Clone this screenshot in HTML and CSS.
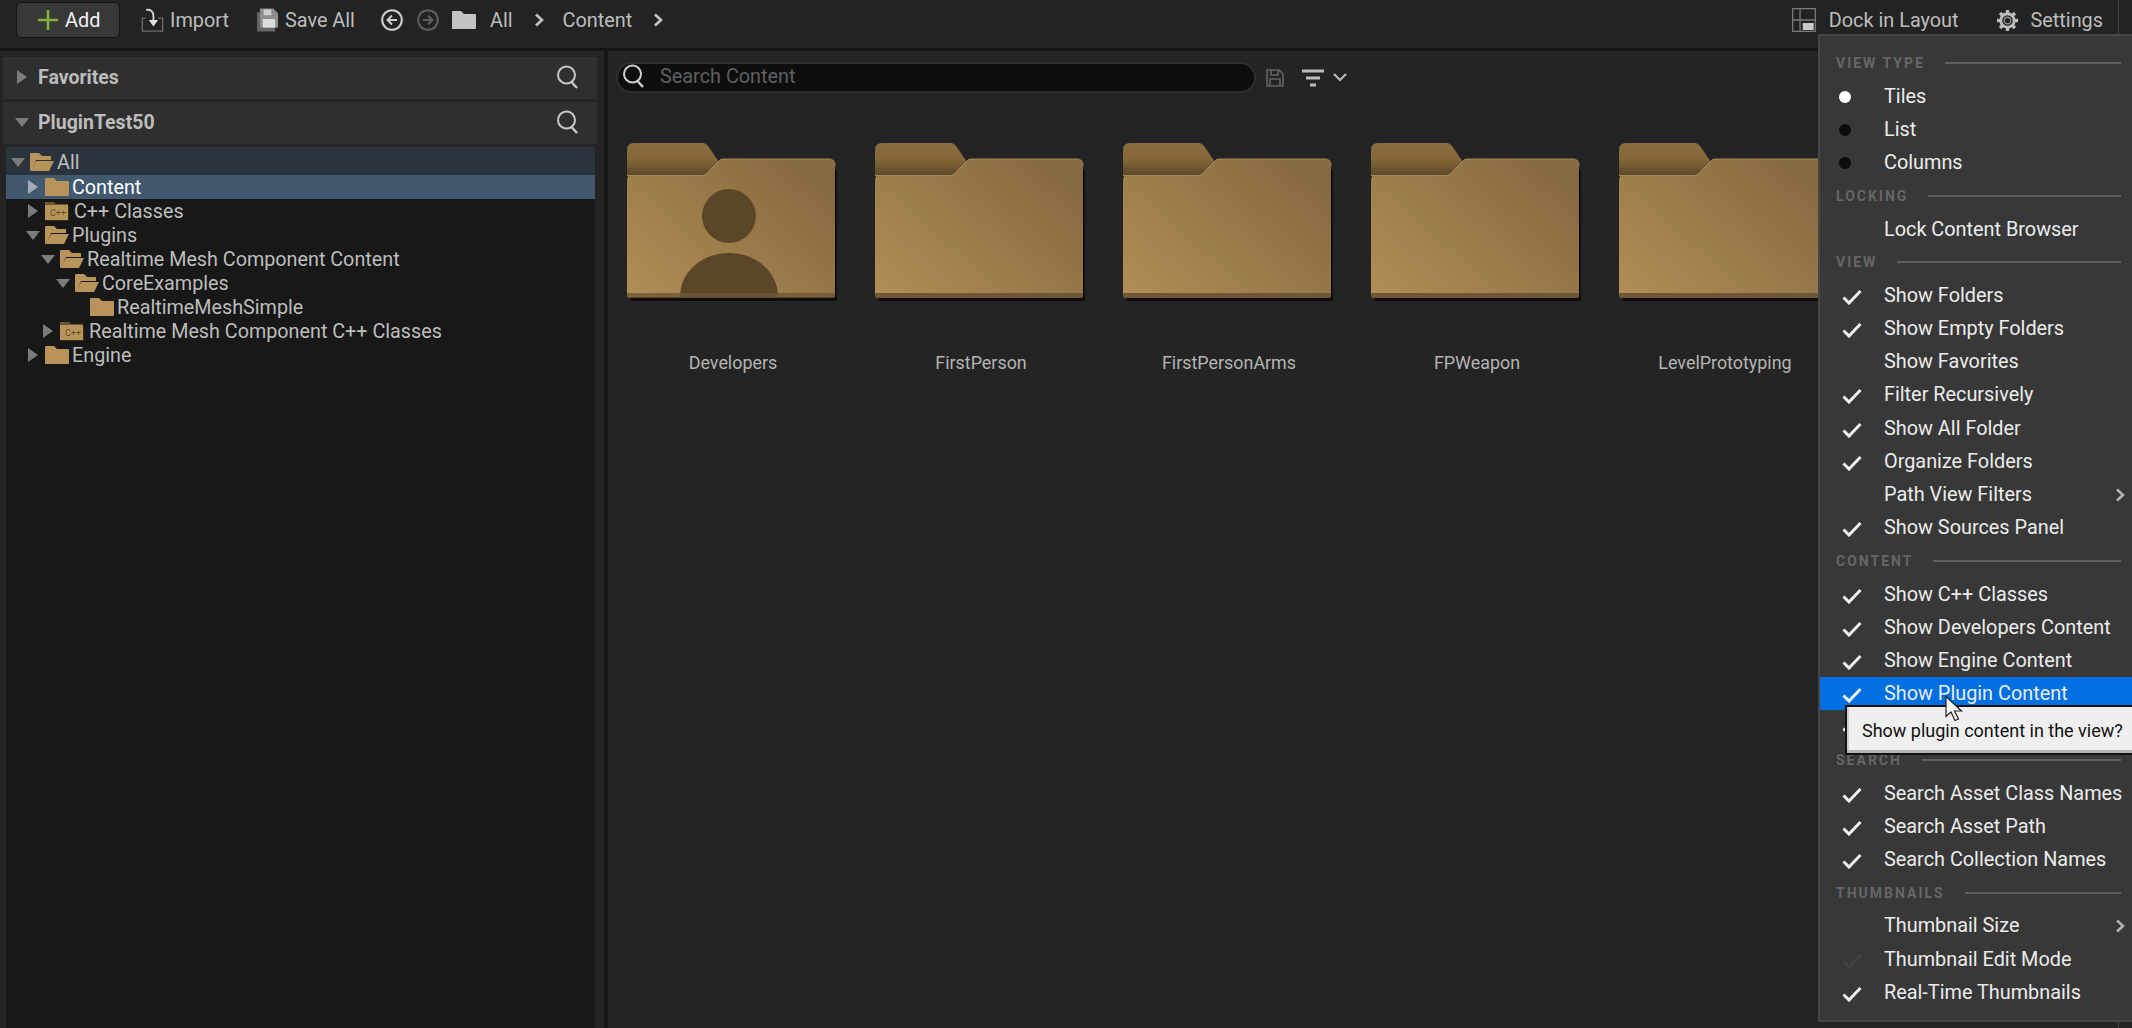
FILE: index.html
```html
<!DOCTYPE html>
<html lang="en">
<head>
  <meta charset="UTF-8" />
  <title>Content Browser</title>
  <link rel="stylesheet" href="styles.css">
</head>
<body>

<svg class="defs" width="0" height="0">
  <defs>
    <linearGradient id="tabGrad" x1="0" y1="0" x2="0" y2="1">
      <stop offset="0" stop-color="#8a6d40"/>
      <stop offset="0.45" stop-color="#846839"/>
      <stop offset="1" stop-color="#5a4629"/>
    </linearGradient>
    <linearGradient id="bodyGrad" x1="0" y1="1" x2="1" y2="0.25">
      <stop offset="0" stop-color="#b18e57"/>
      <stop offset="1" stop-color="#866a3f"/>
    </linearGradient>
    <symbol id="bigFolder" viewBox="0 0 214 160">
      <path d="M4 158 h206 v-132 h-4 v126 h-202 z" fill="#0e0e0e"/>
      <path d="M0 34 V7 Q0 0 7 0 H76 Q79 0 81 3 L94 22 L82 32 H0 Z" fill="url(#tabGrad)"/>
      <path d="M0 38 Q0 32 4 32 H76 Q79 32 81 29 L92 18 Q93 16 96 16 H202 Q208 16 208 23 V154 H0 Z" fill="url(#bodyGrad)"/>
      <path d="M0 32.5 H76 Q79 32 81 29 L92 18 Q93 16 96 16 H202 Q208 16 208 23" fill="none" stroke="#a88a55" stroke-width="1"/>
    </symbol>
    <symbol id="closedFolder" viewBox="0 0 24 18">
      <path d="M0 18 V1 Q0 0 1 0 H9 L12 3 H23 Q24 3 24 4 V17 Q24 18 23 18 Z" fill="#b8945b"/>
    </symbol>
    <symbol id="openFolder" viewBox="0 0 24 18">
      <path d="M0 18 V1 Q0 0 1 0 H9 L12 3 H20 Q21 3 21 4 V7 H6 L2 17 Z" fill="#b8945b"/>
      <path d="M1 18 L6 8 H24 L19 18 Z" fill="#b8945b"/>
    </symbol>
    <symbol id="codeFolder" viewBox="0 0 24 20">
      <path d="M1 20 H24 V5 H1 Z" fill="#3a2a12"/>
      <path d="M0 18 V1 H9 L11 3 H23 V18 Z" fill="#6b5430"/>
      <path d="M0 19 V4 H23 V19 Z" fill="#b8945b"/>
    </symbol>
    <symbol id="lens" viewBox="0 0 24 24">
      <circle cx="10.5" cy="10" r="8.5" fill="none" stroke="currentColor" stroke-width="2"/>
      <path d="M15.5 17 L21 23" stroke="currentColor" stroke-width="2.4" fill="none"/>
    </symbol>
    <symbol id="tick" viewBox="0 0 20 16">
      <path d="M1.5 8.5 L7 14 L18.5 2" fill="none" stroke="currentColor" stroke-width="3"/>
    </symbol>
    <symbol id="chev" viewBox="0 0 10 14">
      <path d="M2 1.5 L8 7 L2 12.5" fill="none" stroke="currentColor" stroke-width="2.6"/>
    </symbol>
  </defs>
</svg>

<header class="toolbar">
  <button class="add-btn">
    <svg class="ic-plus" viewBox="0 0 20 20"><path d="M10 0 V20 M0 10 H20" stroke="#83b13d" stroke-width="2.6"/></svg>
    <span>Add</span>
  </button>
  <div class="tool import">
    <svg class="ic-import" viewBox="0 0 24 26">
      <path d="M5 11 H1 V25 H23 V11 H18" fill="none" stroke="#6e6e6e" stroke-width="1.4"/>
      <path d="M5 2 Q13 1 13 9 V15" fill="none" stroke="#cfcfcf" stroke-width="2"/>
      <path d="M8 13 H18 L13 20 Z" fill="#e2e2e2"/>
    </svg>
    <span>Import</span>
  </div>
  <div class="tool saveall">
    <svg class="ic-save" viewBox="0 0 22 24">
      <path d="M0 4 H3 V20 H19 V24 H0 Z" fill="#666"/>
      <path d="M3 0 H17 L22 5 V20 H3 Z" fill="#8d8d8d"/>
      <path d="M7 1 H15 V7 H7 Z" fill="#cfcfcf"/>
      <path d="M6 11 H19 V20 H6 Z" fill="#dcdcdc"/>
    </svg>
    <span>Save All</span>
  </div>
  <svg class="ic-nav back" viewBox="0 0 22 22">
    <circle cx="11" cy="11" r="9.8" fill="none" stroke="#cfcfcf" stroke-width="2"/>
    <path d="M16 11 H7 M11 6.5 L6.5 11 L11 15.5" fill="none" stroke="#cfcfcf" stroke-width="2"/>
  </svg>
  <svg class="ic-nav fwd" viewBox="0 0 22 22">
    <circle cx="11" cy="11" r="9.8" fill="none" stroke="#5e5e5e" stroke-width="2"/>
    <path d="M6 11 H15 M11 6.5 L15.5 11 L11 15.5" fill="none" stroke="#5e5e5e" stroke-width="2"/>
  </svg>
  <svg class="ic-crumb" viewBox="0 0 24 18"><path d="M0 18 V1 Q0 0 1 0 H9 L12 3 H23 Q24 3 24 4 V17 Q24 18 23 18 Z" fill="#c4c4c4"/></svg>
  <span class="crumb first">All</span>
  <svg class="crumb-sep"><use href="#chev"/></svg>
  <span class="crumb">Content</span>
  <svg class="crumb-sep"><use href="#chev"/></svg>

  <div class="toolbar-right">
    <div class="tool">
      <svg class="ic-dock" viewBox="0 0 24 24">
        <path d="M.7 .7 H23.3 V23.3 H.7 Z M8 .7 V23.3 M.7 12 H23.3" fill="none" stroke="#7a7a7a" stroke-width="1.3"/>
        <path d="M10.7 15 H21.7 V22 H10.7 Z" fill="#c8c8c8"/>
      </svg>
      <span>Dock in Layout</span>
    </div>
    <div class="tool settings">
      <svg class="ic-gear" viewBox="0 0 24 24">
        <path d="M12 1 V5 M12 19 V23 M1 12 H5 M19 12 H23 M4.2 4.2 L7 7 M17 17 L19.8 19.8 M4.2 19.8 L7 17 M17 7 L19.8 4.2" stroke="#bdbdbd" stroke-width="3.4"/>
        <circle cx="12" cy="12" r="7" fill="none" stroke="#bdbdbd" stroke-width="3"/>
        <circle cx="12" cy="12" r="3.4" fill="none" stroke="#8a8a8a" stroke-width="1.4"/>
      </svg>
      <span>Settings</span>
    </div>
  </div>
</header>

<div class="main">
  <aside class="sources">
    <div class="src-head">
      <span class="head-arrow"><i class="tri-right"></i></span>
      <span class="head-name">Favorites</span>
      <svg class="head-lens"><use href="#lens"/></svg>
    </div>
    <div class="src-head second">
      <span class="head-arrow"><i class="tri-down"></i></span>
      <span class="head-name">PluginTest50</span>
      <svg class="head-lens"><use href="#lens"/></svg>
    </div>
    <div class="tree">
      <div class="row parent d0"><span class="arrow"><i class="tri-down"></i></span><svg class="fold"><use href="#openFolder"/></svg><span class="name">All</span></div>
      <div class="row selected d1"><span class="arrow"><i class="tri-right"></i></span><svg class="fold"><use href="#closedFolder"/></svg><span class="name">Content</span></div>
      <div class="row d1"><span class="arrow"><i class="tri-right"></i></span><span class="code-fold"><svg class="fold"><use href="#codeFolder"/></svg><b>C++</b></span><span class="name code">C++ Classes</span></div>
      <div class="row d1"><span class="arrow"><i class="tri-down"></i></span><svg class="fold"><use href="#openFolder"/></svg><span class="name">Plugins</span></div>
      <div class="row d2"><span class="arrow"><i class="tri-down"></i></span><svg class="fold"><use href="#openFolder"/></svg><span class="name">Realtime Mesh Component Content</span></div>
      <div class="row d3"><span class="arrow"><i class="tri-down"></i></span><svg class="fold"><use href="#openFolder"/></svg><span class="name">CoreExamples</span></div>
      <div class="row d4"><span class="arrow"></span><svg class="fold"><use href="#closedFolder"/></svg><span class="name">RealtimeMeshSimple</span></div>
      <div class="row d2"><span class="arrow"><i class="tri-right"></i></span><span class="code-fold"><svg class="fold"><use href="#codeFolder"/></svg><b>C++</b></span><span class="name code">Realtime Mesh Component C++ Classes</span></div>
      <div class="row d1"><span class="arrow"><i class="tri-right"></i></span><svg class="fold"><use href="#closedFolder"/></svg><span class="name">Engine</span></div>
    </div>
  </aside>

  <section class="content">
    <div class="search-row">
      <div class="search">
        <svg class="search-lens"><use href="#lens"/></svg>
        <span>Search Content</span>
      </div>
      <svg class="ic-savesearch" viewBox="0 0 18 18">
        <path d="M1 1 H13 L17 5 V17 H1 Z M5 1 V6 H12 V1 M4 17 V10 H14 V17" fill="none" stroke="#626262" stroke-width="1.7"/>
      </svg>
      <svg class="ic-filter" viewBox="0 0 22 18">
        <path d="M0 2 H22 M4 9 H18 M8 16 H14" stroke="#bcbcbc" stroke-width="3"/>
      </svg>
      <svg class="ic-caret" viewBox="0 0 14 9"><path d="M1 1 L7 7 L13 1" fill="none" stroke="#bcbcbc" stroke-width="2"/></svg>
    </div>
    <div class="tiles">
      <div class="tile">
        <svg class="big-folder" viewBox="0 0 214 160">
          <use href="#bigFolder"/>
          <ellipse cx="102" cy="73" rx="27" ry="27" fill="#5b4627"/>
          <path d="M53 154 C53 128 76 110 102 110 C128 110 151 128 151 154 Z" fill="#5b4627"/>
          <path d="M0 150 H208 V152 Q208 155 205 155 H3 Q0 155 0 152 Z" fill="#6f5634" opacity="0.8"/>
        </svg>
        <div class="tile-name">Developers</div>
      </div>
      <div class="tile"><svg class="big-folder" viewBox="0 0 214 160"><use href="#bigFolder"/><path d="M0 150 H208 V152 Q208 155 205 155 H3 Q0 155 0 152 Z" fill="#6f5634"/></svg><div class="tile-name">FirstPerson</div></div>
      <div class="tile"><svg class="big-folder" viewBox="0 0 214 160"><use href="#bigFolder"/><path d="M0 150 H208 V152 Q208 155 205 155 H3 Q0 155 0 152 Z" fill="#6f5634"/></svg><div class="tile-name">FirstPersonArms</div></div>
      <div class="tile"><svg class="big-folder" viewBox="0 0 214 160"><use href="#bigFolder"/><path d="M0 150 H208 V152 Q208 155 205 155 H3 Q0 155 0 152 Z" fill="#6f5634"/></svg><div class="tile-name">FPWeapon</div></div>
      <div class="tile"><svg class="big-folder" viewBox="0 0 214 160"><use href="#bigFolder"/><path d="M0 150 H208 V152 Q208 155 205 155 H3 Q0 155 0 152 Z" fill="#6f5634"/></svg><div class="tile-name">LevelPrototyping</div></div>
    </div>
  </section>
</div>

<div class="panel-edge"></div>

<nav class="menu">
  <div class="sect"><span>VIEW TYPE</span></div>
  <div class="item"><i class="radio on"></i>Tiles</div>
  <div class="item"><i class="radio"></i>List</div>
  <div class="item"><i class="radio"></i>Columns</div>
  <div class="sect"><span>LOCKING</span></div>
  <div class="item">Lock Content Browser</div>
  <div class="sect"><span>VIEW</span></div>
  <div class="item"><svg class="check"><use href="#tick"/></svg>Show Folders</div>
  <div class="item"><svg class="check"><use href="#tick"/></svg>Show Empty Folders</div>
  <div class="item">Show Favorites</div>
  <div class="item"><svg class="check"><use href="#tick"/></svg>Filter Recursively</div>
  <div class="item"><svg class="check"><use href="#tick"/></svg>Show All Folder</div>
  <div class="item"><svg class="check"><use href="#tick"/></svg>Organize Folders</div>
  <div class="item">Path View Filters<svg class="sub"><use href="#chev"/></svg></div>
  <div class="item"><svg class="check"><use href="#tick"/></svg>Show Sources Panel</div>
  <div class="sect"><span>CONTENT</span></div>
  <div class="item"><svg class="check"><use href="#tick"/></svg>Show C++ Classes</div>
  <div class="item"><svg class="check"><use href="#tick"/></svg>Show Developers Content</div>
  <div class="item"><svg class="check"><use href="#tick"/></svg>Show Engine Content</div>
  <div class="item hover"><svg class="check"><use href="#tick"/></svg>Show Plugin Content</div>
  <div class="item"><svg class="check"><use href="#tick"/></svg></div>
  <div class="sect"><span>SEARCH</span></div>
  <div class="item"><svg class="check"><use href="#tick"/></svg>Search Asset Class Names</div>
  <div class="item"><svg class="check"><use href="#tick"/></svg>Search Asset Path</div>
  <div class="item"><svg class="check"><use href="#tick"/></svg>Search Collection Names</div>
  <div class="sect"><span>THUMBNAILS</span></div>
  <div class="item">Thumbnail Size<svg class="sub"><use href="#chev"/></svg></div>
  <div class="item"><svg class="check dim"><use href="#tick"/></svg>Thumbnail Edit Mode</div>
  <div class="item"><svg class="check"><use href="#tick"/></svg>Real-Time Thumbnails</div>
</nav>

<div class="tooltip">Show plugin content in the view?</div>

<svg class="cursor" viewBox="0 0 18 26">
  <path d="M1 1 V21 L6 16.5 L10 25 L13.5 23.5 L9.5 15.5 L16.5 15.5 Z" fill="#f4f4f4" stroke="#222" stroke-width="1.2"/>
</svg>

</body>
</html>
```

FILE: styles.css
```css
html, body {
  margin: 0;
  padding: 0;
  height: 100%;
  overflow: hidden;
}
body {
  position: relative;
  width: 2132px;
  height: 1028px;
  background-color: #242424;
  color: #c0c0c0;
  font-family: Roboto, "Noto Sans", sans-serif;
  font-size: 19.85px;
}
.defs {
  position: absolute;
}

/* top bar */
.toolbar {
  display: flex;
  align-items: center;
  height: 40px;
  padding: 0 29px 8px 16px;
  background-color: #232323;
  border-bottom: 3px solid #151515;
}
.add-btn {
  display: flex;
  align-items: center;
  width: 104px;
  height: 36px;
  padding: 0 0 0 21px;
  background-color: #383838;
  border: 1px solid #151515;
  border-radius: 5px;
  color: #f2f2f2;
  font: 19.85px Roboto, sans-serif;
  box-sizing: border-box;
}
.ic-plus {
  width: 20px;
  height: 20px;
  margin-right: 7px;
}
.tool {
  display: flex;
  align-items: center;
  color: #bdbdbd;
}
.import {
  margin-left: 21px;
}
.ic-import {
  width: 23px;
  height: 24px;
  margin-right: 6px;
}
.saveall {
  margin-left: 28px;
}
.ic-save {
  width: 21px;
  height: 24px;
  margin-right: 7px;
}
.ic-nav {
  width: 22px;
  height: 22px;
}
.back {
  margin-left: 26px;
}
.fwd {
  margin-left: 14px;
}
.ic-crumb {
  width: 24px;
  height: 18px;
  margin-left: 13px;
}
.crumb {
  color: #bdbdbd;
}
.crumb.first {
  margin-left: 14px;
}
.crumb-sep {
  width: 10px;
  height: 14px;
  margin: 0 19px 0 21px;
  color: #c4c4c4;
}
.toolbar-right {
  display: flex;
  align-items: center;
  margin-left: auto;
}
.ic-dock {
  width: 24px;
  height: 24px;
  margin-right: 13px;
}
.settings {
  margin-left: 37px;
}
.ic-gear {
  width: 23px;
  height: 23px;
  margin-right: 12px;
}

/* the lines on the far right */
.panel-edge {
  position: absolute;
  left: 2118px;
  top: 0;
  bottom: 0;
  width: 1px;
  background-color: #454545;
}

.main {
  display: flex;
  height: 977px;
}

/* sources panel */
.sources {
  display: flex;
  flex-direction: column;
  width: 594px;
  padding: 6px 2px 0 3px;
  margin-right: 3px;
  box-shadow: 5px 0 0 #242424, 9px 0 0 #161616;
}
.src-head {
  display: flex;
  align-items: center;
  flex: none;
  height: 42px;
  padding: 0 0 2px 11px;
  box-sizing: border-box;
  background-color: #2f2f2f;
  color: #bcbcbc;
}
.src-head.second {
  margin-top: 3px;
}
.head-arrow {
  display: flex;
  justify-content: center;
  width: 15px;
  flex: none;
}
.head-name {
  margin-left: 9px;
  font-weight: 700;
  font-size: 19.5px;
}
.head-lens {
  width: 24px;
  height: 24px;
  margin-left: auto;
  margin-right: 17px;
  color: #c8c8c8;
}
.tri-right {
  display: block;
  width: 0;
  height: 0;
  border-left: 10px solid #7b7b7b;
  border-top: 7px solid transparent;
  border-bottom: 7px solid transparent;
}
.tri-down {
  display: block;
  width: 0;
  height: 0;
  border-top: 9px solid #7b7b7b;
  border-left: 7.5px solid transparent;
  border-right: 7.5px solid transparent;
}
.tree {
  flex: 1;
  margin: 3px 2px 0 3px;
  background-color: #181818;
}
.row {
  display: flex;
  align-items: center;
  height: 24px;
  box-sizing: border-box;
  font-size: 19.75px;
  color: #bdbdbd;
}
.row.parent {
  height: 28px;
  padding-top: 2px;
  background-color: #2b333d;
}
.row.selected {
  background-color: #41586f;
  color: #fff;
}
.row.selected .tri-right {
  border-left-color: #a3adb8;
}
.d0 { padding-left: 0; }
.d1 { padding-left: 15px; }
.d2 { padding-left: 30px; }
.d3 { padding-left: 45px; }
.d4 { padding-left: 60px; }
.arrow {
  display: flex;
  align-items: center;
  justify-content: center;
  width: 24px;
  height: 24px;
  flex: none;
}
.fold {
  width: 24px;
  height: 18px;
  flex: none;
}
.name {
  margin-left: 3px;
  white-space: nowrap;
}
.name.code {
  margin-left: 5px;
}
.code-fold {
  position: relative;
  width: 24px;
  height: 20px;
  flex: none;
}
.code-fold .fold {
  display: block;
  height: 20px;
}
.code-fold b {
  position: absolute;
  left: 5px;
  top: 7px;
  font-size: 9px;
  line-height: 11px;
  font-weight: 400;
  color: #644a24;
}

/* main content */
.content {
  flex: 1;
  margin-left: 4px;
  padding-left: 3px;
}
.search-row {
  display: flex;
  align-items: center;
  height: 31px;
  margin-top: 11px;
  padding-left: 7px;
}
.search {
  display: flex;
  align-items: center;
  width: 640px;
  height: 31px;
  padding-bottom: 3px;
  box-sizing: border-box;
  background-color: #0e0e0e;
  border: 2px solid #2e2e2e;
  border-radius: 16px;
  color: #5f5f5f;
}
.search-lens {
  width: 24px;
  height: 24px;
  margin-left: 4px;
  margin-right: 14px;
  color: #d0d0d0;
}
.ic-savesearch {
  width: 18px;
  height: 18px;
  margin-left: 10px;
}
.ic-filter {
  width: 22px;
  height: 18px;
  margin-left: 18px;
}
.ic-caret {
  width: 14px;
  height: 9px;
  margin-left: 9px;
}
.tiles {
  display: flex;
  margin-top: 50px;
}
.tile {
  flex: none;
  width: 248px;
}
.big-folder {
  display: block;
  width: 214px;
  height: 160px;
  margin-left: 18px;
}
.tile-name {
  margin-top: 50px;
  text-align: center;
  font-size: 17.9px;
  line-height: 20px;
  color: #b4b4b4;
}

/* settings dropdown */
.menu {
  position: absolute;
  left: 1818px;
  top: 34px;
  right: 0;
  height: 988px;
  padding-top: 10.5px;
  box-sizing: border-box;
  background-color: #383838;
  border: 2px solid #464646;
  border-right: 0;
  color: #ececec;
}
.sect {
  display: flex;
  align-items: center;
  height: 33.2px;
  padding: 0 11px 0 16px;
  font-size: 14px;
  font-weight: 700;
  letter-spacing: 2px;
  color: #666;
}
.sect::after {
  content: "";
  flex: 1;
  height: 2px;
  margin-left: 20px;
  background-color: #5e5e5e;
}
.item {
  position: relative;
  display: flex;
  align-items: center;
  height: 33.2px;
  padding-left: 64px;
  white-space: nowrap;
}
.item.hover {
  background-color: #0070e0;
}
.radio {
  position: absolute;
  left: 19px;
  top: 11px;
  width: 12px;
  height: 12px;
  border-radius: 50%;
  background-color: #0c0c0c;
}
.radio.on {
  background-color: #fff;
}
.check {
  position: absolute;
  left: 22px;
  top: 10px;
  width: 20px;
  height: 16px;
  color: #f2f2f2;
}
.check.dim {
  color: #444;
}
.sub {
  position: absolute;
  right: 7px;
  top: 10px;
  width: 10px;
  height: 14px;
  color: #b0b0b0;
}

.tooltip {
  position: absolute;
  left: 1845px;
  top: 705px;
  right: 0;
  height: 50px;
  box-sizing: border-box;
  padding-left: 15px;
  line-height: 47px;
  background-color: #efefef;
  border: 2px solid #111;
  border-right: 0;
  box-shadow: inset 0 -3px 0 #b5b5b5, inset 2px 0 0 #cfcfcf;
  color: #111;
  font-size: 18px;
  white-space: nowrap;
}
.cursor {
  position: absolute;
  left: 1945px;
  top: 695px;
  width: 18px;
  height: 27px;
}
```
